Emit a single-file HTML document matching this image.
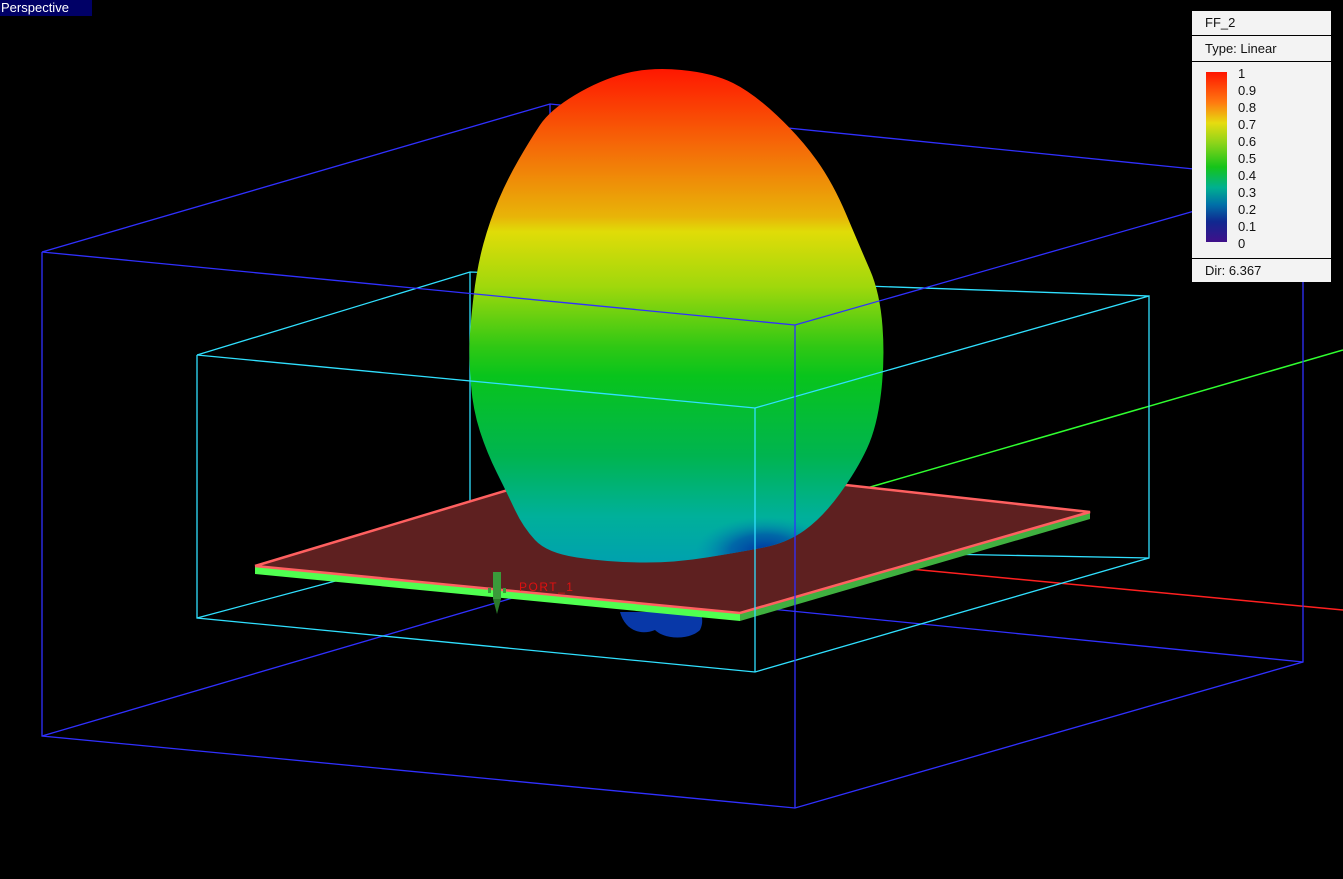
<!DOCTYPE html>
<html><head><style>
html,body{margin:0;padding:0;background:#000;width:1343px;height:879px;overflow:hidden;font-family:"Liberation Sans",sans-serif;}
.lab{position:absolute;left:0;top:0;width:91px;height:16px;background:#000066;color:#fff;font-size:13px;line-height:16px;padding-left:1px;}
.leg{position:absolute;left:1192px;top:11px;width:139px;height:271px;background:#f3f3f3;font-size:13px;color:#111;}
.leg .r{border-bottom:1px solid #000;height:24px;line-height:24px;padding-left:13px;}
.bar{position:absolute;left:14px;top:61px;width:21px;height:170px;background:linear-gradient(#ff1500,#ff7a10 18%,#e6dc10 30%,#8bd41a 42%,#15c41a 56%,#00b090 68%,#0070a8 78%,#102890 88%,#40108a);}
.ticks{position:absolute;left:46px;top:54px;line-height:17px;font-size:13px;}
.dir{position:absolute;left:0;bottom:0;width:126px;height:23px;border-top:1px solid #000;line-height:23px;padding-left:13px;}
</style></head><body>
<svg width="1343" height="879" style="position:absolute;left:0;top:0">
<defs>
<linearGradient id="eg" x1="0" y1="67" x2="0" y2="566" gradientUnits="userSpaceOnUse">
<stop offset="0" stop-color="#ff1500"/><stop offset="0.16" stop-color="#f56a08"/>
<stop offset="0.3" stop-color="#e8b408"/><stop offset="0.33" stop-color="#e0dc08"/>
<stop offset="0.44" stop-color="#a0d80c"/><stop offset="0.56" stop-color="#30c814"/>
<stop offset="0.62" stop-color="#08c41c"/><stop offset="0.78" stop-color="#00b450"/>
<stop offset="0.9" stop-color="#00b09a"/><stop offset="1" stop-color="#00a0b0"/>
</linearGradient>
<radialGradient id="bl" cx="765" cy="552" r="70" gradientTransform="translate(765 552) scale(1 0.5) translate(-765 -552)" gradientUnits="userSpaceOnUse">
<stop offset="0" stop-color="#0030a0"/><stop offset="0.5" stop-color="#0058a8" stop-opacity="0.8"/><stop offset="1" stop-color="#0090b0" stop-opacity="0"/>
</radialGradient>
<clipPath id="ec"><path d="M625,73.5 Q650,67 681.5,70 Q713,73 733,83 Q753,93 776.5,115 Q800,137 816.5,160 Q833,183 846.5,215 Q860,247 870,270 Q880,293 882.5,326.5 Q885,360 881,393.5 Q877,427 867,448.5 Q857,470 840,493.5 Q823,517 805,530 Q787,543 763.5,547.5 Q740,552 706.5,557.5 Q673,563 640,562.5 Q607,562 577,557.5 Q547,553 535,540 Q523,527 515,510 Q507,493 497,473 Q487,453 480,431.5 Q473,410 471,385 Q469,360 469.5,343.5 Q470,327 473.5,297 Q477,267 483.5,243.5 Q490,220 498.5,200 Q507,180 518.5,160 Q530,140 540,125 Q550,110 575,95 Q600,80 625,73.5 Z"/></clipPath>
</defs>
<g fill="none" stroke-width="1.3">
<polyline stroke="#3030ff" points="42,736 550,587 1303,662"/>
<line stroke="#3030ff" x1="550" y1="104" x2="550" y2="587"/>
<polyline stroke="#3030ff" points="42,252 550,104 1303,180"/>
<polyline stroke="#30e0ff" points="197,618 470,545 1149,558"/>
<line stroke="#30e0ff" x1="470" y1="272" x2="470" y2="545"/>
<polyline stroke="#30e0ff" points="197,355 470,272 1149,296"/>
</g>
<line x1="860" y1="490" x2="1343" y2="350" stroke="#30ff30" stroke-width="1.5"/>
<line x1="900" y1="568" x2="1343" y2="610" stroke="#ff2020" stroke-width="1.5"/>
<path d="M620,612 C625,630 640,636 655,630 C665,640 690,640 700,630 C705,620 700,612 700,612Z" fill="#0838a8"/>
<polygon points="255,566 611,459 1090,512 740,613" fill="#5e2020"/>
<polygon points="255,566 740,613 740,621 255,574" fill="#50ff50"/>
<polygon points="740,613 1090,512 1090,519 740,621" fill="#40b040"/>
<polyline points="255,566 611,459 1090,512 740,613 255,566" fill="none" stroke="#ff6060" stroke-width="2.5"/>
<g clip-path="url(#ec)">
<rect x="460" y="60" width="430" height="510" fill="url(#eg)"/>
<rect x="460" y="60" width="430" height="510" fill="url(#bl)"/>
</g>
<g fill="none" stroke-width="1.3">
<polyline stroke="#30e0ff" points="197,355 755,408 1149,296 1149,558 755,672 197,618 197,355"/>
<line stroke="#30e0ff" x1="755" y1="408" x2="755" y2="672"/>
<polyline stroke="#3030ff" points="42,252 795,325 1303,180 1303,662 795,808 42,736 42,252"/>
<line stroke="#3030ff" x1="795" y1="325" x2="795" y2="808"/>
</g>
<rect x="493" y="572" width="8" height="27" fill="#3a9a3a"/>
<polygon points="493,599 501,599 497,614" fill="#2a7a2a"/>
<rect x="488" y="588" width="3" height="5" fill="#3a9a3a"/><rect x="503" y="588" width="3" height="5" fill="#3a9a3a"/>
<text x="519" y="591" fill="#e01010" font-size="12" font-family="Liberation Sans,sans-serif" letter-spacing="1.5">PORT_1</text>
</svg>
<div class="lab">Perspective</div>
<div class="leg">
<div class="r">FF_2</div>
<div class="r" style="height:25px;line-height:25px">Type: Linear</div>
<div class="bar"></div>
<div class="ticks">1<br>0.9<br>0.8<br>0.7<br>0.6<br>0.5<br>0.4<br>0.3<br>0.2<br>0.1<br>0</div>
<div class="dir">Dir: 6.367</div>
</div>
</body></html>
